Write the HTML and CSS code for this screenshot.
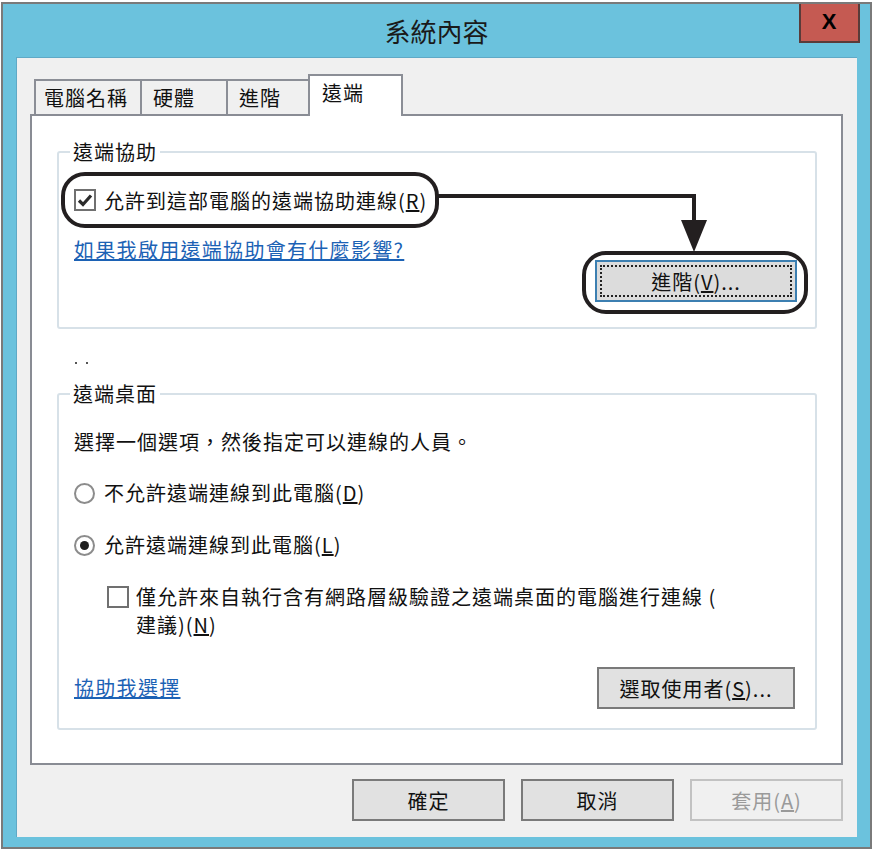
FILE: index.html
```html
<!DOCTYPE html>
<html lang="zh-Hant">
<head>
    <meta charset="UTF-8">
    <meta name="viewport" content="width=device-width, initial-scale=1.0">
    <title>系統內容</title>
    <link rel="stylesheet" href="styles.css">
</head>
<body>

    <div class="window">
        <div class="titlebar">
            <span></span>
            <h1 class="title">系統內容</h1>
            <div class="close-btn">X</div>
        </div>

        <div class="dialog">
            <div class="tabs">
                <div class="tab tab-name">電腦名稱</div>
                <div class="tab tab-hw">硬體</div>
                <div class="tab tab-adv">進階</div>
                <div class="tab tab-remote active">遠端</div>
            </div>

            <div class="tab-page">
                <!-- Remote assistance -->
                <fieldset class="group group-assist">
                    <legend>遠端協助</legend>
                    <div class="callout callout-check">
                        <span class="checkbox">
                            <svg width="18" height="18" viewBox="0 0 18 18">
                                <path d="M3 9.5 L7 13.5 L15 4.5" fill="none" stroke="#2b2b2b" stroke-width="3.2"/>
                            </svg>
                        </span>
                        <span>允許到這部電腦的遠端協助連線(<u>R</u>)</span>
                    </div>
                    <div class="link-row">
                        <a href="#" class="link">如果我啟用遠端協助會有什麼影響?</a>
                        <div class="callout callout-btn">
                            <button class="btn btn-focus"><span class="focus-ring">進階(<u>V</u>)...</span></button>
                        </div>
                    </div>
                </fieldset>

                <svg class="arrow" width="272" height="62" viewBox="0 0 272 62">
                    <path d="M0 4 H256 V32" fill="none" stroke="#231f20" stroke-width="4"/>
                    <polygon points="243,28 269,28 256,60" fill="#231f20"/>
                </svg>

                <div class="dots"><span></span><span></span></div>

                <!-- Remote desktop -->
                <fieldset class="group group-desktop">
                    <legend>遠端桌面</legend>
                    <p class="hint">選擇一個選項，然後指定可以連線的人員。</p>
                    <div class="option">
                        <span class="radio"></span>
                        <span>不允許遠端連線到此電腦(<u>D</u>)</span>
                    </div>
                    <div class="option">
                        <span class="radio checked"></span>
                        <span>允許遠端連線到此電腦(<u>L</u>)</span>
                    </div>
                    <div class="option option-nla">
                        <span class="checkbox"></span>
                        <span>僅允許來自執行含有網路層級驗證之遠端桌面的電腦進行連線 (<br>建議)(<u>N</u>)</span>
                    </div>
                    <div class="link-row bottom-row">
                        <a href="#" class="link">協助我選擇</a>
                        <button class="btn btn-users">選取使用者(<u>S</u>)...</button>
                    </div>
                </fieldset>
            </div>

            <div class="actions">
                <button class="btn btn-action">確定</button>
                <button class="btn btn-action">取消</button>
                <button class="btn btn-action" disabled>套用(<u>A</u>)</button>
            </div>
        </div>
    </div>

</body>
</html>
```

FILE: styles.css
```css
body {
    margin: 0;
    padding: 0;
    background-color: white;
    font-family: "Noto Sans CJK TC", "Noto Sans", sans-serif;
    font-size: 20px;
    letter-spacing: 1px;
    color: #111;
}

.window {
    box-sizing: border-box;
    width: 871px;
    height: 847px;
    margin: 2px 0 0 1px;
    border: 2px solid #7a7a7a;
    background-color: #6bc2dd;
}

/* Title bar */
.titlebar {
    display: grid;
    grid-template-columns: 1fr auto 1fr;
    height: 53px;
}

.title {
    margin: 0;
    font-size: 26px;
    font-weight: normal;
    letter-spacing: 0;
    line-height: 53px;
    color: #1a1a1a;
}

.close-btn {
    justify-self: end;
    box-sizing: border-box;
    width: 61px;
    height: 39px;
    margin-right: 10px;
    background-color: #c55a52;
    border: 2px solid #5a3b39;
    border-top: none;
    font-family: "Liberation Sans", Arial, sans-serif;
    font-size: 22px;
    font-weight: bold;
    line-height: 36px;
    text-align: center;
    color: #000;
}

/* Dialog body */
.dialog {
    box-sizing: border-box;
    height: 780px;
    margin: 0 13px;
    padding: 16px 14px 0 14px;
    background-color: #f0f0f0;
    border-top: 1px solid #5fa9c6;
    border-left: 1px solid #5fa9c6;
}

.tabs {
    display: flex;
    align-items: flex-end;
    height: 40px;
    margin-left: 3px;
    margin-right: -1px;
}

.tab {
    box-sizing: border-box;
    height: 35px;
    padding-left: 8px;
    margin-left: -2px;
    border: 2px solid #8b8e96;
    border-bottom: none;
    background-color: #f0f0f0;
    line-height: 33px;
}

.tab-name { width: 108px; margin-left: 0; }
.tab-hw { width: 88px; padding-left: 11px; }
.tab-adv { width: 84px; padding-left: 11px; }

.tab-remote {
    width: 95px;
    padding-left: 12px;
}

.tab.active {
    position: relative;
    z-index: 1;
    height: 42px;
    margin-bottom: -2px;
    background-color: white;
    line-height: 34px;
}

.tab-page {
    position: relative;
    box-sizing: border-box;
    height: 651px;
    padding: 0 24px 0 25px;
    margin-left: -1px;
    background-color: white;
    border: 2px solid #898c94;
}

/* Group boxes */
.group {
    margin: 0;
    padding: 0 18px 13px 15px;
    border: 2px solid #d7e1e8;
    border-radius: 3px;
}

.group legend {
    padding: 0 3px;
    margin-left: -4px;
    line-height: 24px;
}

.group-assist {
    margin-top: 24px;
}

.group-desktop {
    margin-top: 18px;
    padding-bottom: 19px;
}

.callout {
    box-sizing: border-box;
    border: 4px solid #231f20;
    border-radius: 24px;
}

.callout-check {
    display: inline-flex;
    align-items: center;
    gap: 8px;
    height: 56px;
    margin-top: 8px;
    margin-left: -13px;
    padding: 0 8px 0 9px;
}

.callout-btn {
    margin-top: 15px;
    margin-right: -11px;
    padding: 5px 7px 8px 9px;
}

.checkbox {
    display: inline-flex;
    align-items: center;
    justify-content: center;
    box-sizing: border-box;
    width: 22px;
    height: 22px;
    flex-shrink: 0;
    border: 2px solid #707070;
    background-color: white;
}

.radio {
    box-sizing: border-box;
    width: 21px;
    height: 21px;
    flex-shrink: 0;
    border: 2px solid #8c8c8c;
    border-radius: 50%;
    background-color: white;
    display: flex;
    align-items: center;
    justify-content: center;
}

.radio.checked::after {
    content: "";
    width: 9px;
    height: 9px;
    border-radius: 50%;
    background-color: #1e1e1e;
}

.link-row {
    display: flex;
    justify-content: space-between;
    align-items: flex-start;
    margin-top: 8px;
}

.link {
    color: #1c62b5;
    line-height: 28px;
    letter-spacing: 1.3px;
    text-decoration: underline;
}

.arrow {
    position: absolute;
    left: 406px;
    top: 76px;
}

.dots {
    display: flex;
    gap: 9px;
    height: 2px;
    margin-top: 33px;
    margin-left: 18px;
}

.dots span {
    width: 2px;
    height: 2px;
    background-color: #555;
}

.hint {
    margin: 22px 0 0;
    line-height: 28px;
}

.option {
    display: flex;
    align-items: center;
    gap: 9px;
    margin-top: 23px;
    line-height: 28px;
}

.option + .option {
    margin-top: 24px;
}

.option-nla {
    align-items: flex-start;
    gap: 7px;
    margin-left: 33px;
}

.option-nla .checkbox {
    margin-top: 3px;
}

.bottom-row {
    margin-top: 28px;
    align-items: center;
}

/* Buttons */
.btn {
    box-sizing: border-box;
    height: 42px;
    font-family: inherit;
    font-size: 20px;
    letter-spacing: 1px;
    color: #111;
    background-color: #e1e1e1;
    border: 2px solid #7a7a7a;
    padding: 0;
}

.btn-focus {
    display: flex;
    width: 202px;
    padding: 3px;
    border-color: #3c7fb1;
    background-color: #dcdcdc;
}

.focus-ring {
    flex: 1;
    border: 2px dotted #222;
    line-height: 30px;
}

.btn-users {
    width: 198px;
    margin-right: 2px;
}

.actions {
    display: flex;
    justify-content: flex-end;
    gap: 16px;
    margin-top: 14px;
}

.btn-action {
    width: 153px;
}

.btn-action:disabled {
    background-color: #f0f0f0;
    border-color: #c2c2c2;
    color: #9a9a9a;
}
```
